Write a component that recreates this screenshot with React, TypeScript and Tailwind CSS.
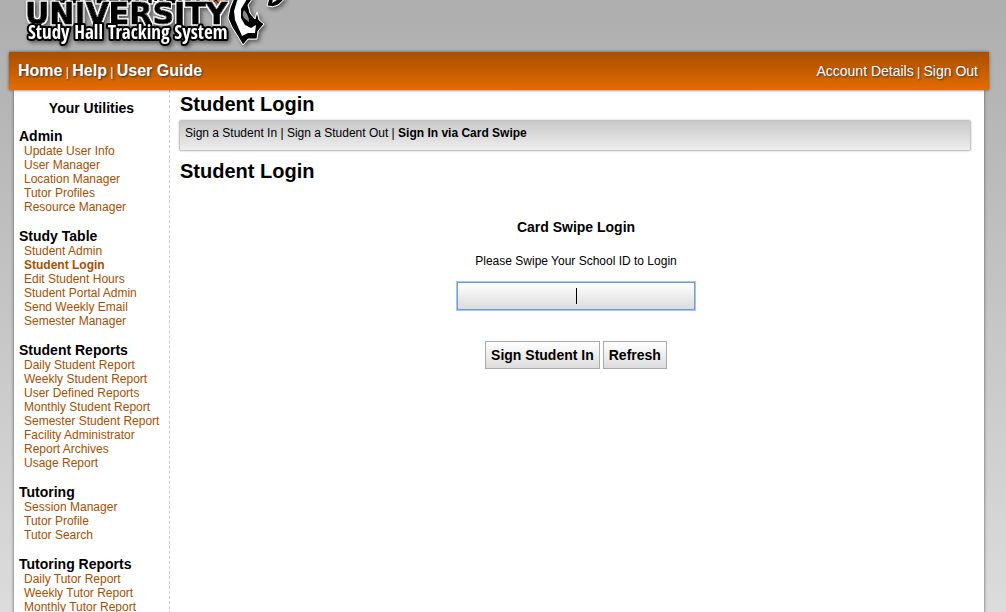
import React from "react";

const sections = [
  { title: "Admin", links: ["Update User Info", "User Manager", "Location Manager", "Tutor Profiles", "Resource Manager"] },
  { title: "Study Table", links: ["Student Admin", "Student Login", "Edit Student Hours", "Student Portal Admin", "Send Weekly Email", "Semester Manager"] },
  { title: "Student Reports", links: ["Daily Student Report", "Weekly Student Report", "User Defined Reports", "Monthly Student Report", "Semester Student Report", "Facility Administrator", "Report Archives", "Usage Report"] },
  { title: "Tutoring", links: ["Session Manager", "Tutor Profile", "Tutor Search"] },
  { title: "Tutoring Reports", links: ["Daily Tutor Report", "Weekly Tutor Report", "Monthly Tutor Report"] },
];

function Logo() {
  return (
    <svg viewBox="0 0 300 52" className="block h-[52px] w-[300px]" role="img" aria-label="Development University Study Hall Tracking System">
      <defs>
        <filter id="shade" x="-10%" y="-20%" width="120%" height="150%">
          <feDropShadow dx="2" dy="2" stdDeviation="2" floodColor="#000" floodOpacity="0.5" />
        </filter>
        <filter id="outline" x="-5%" y="-20%" width="110%" height="140%">
          <feMorphology in="SourceAlpha" operator="dilate" radius="1" result="fat" />
          <feFlood floodColor="#fff" />
          <feComposite in2="fat" operator="in" result="edge" />
          <feMerge>
            <feMergeNode in="edge" />
            <feMergeNode in="SourceGraphic" />
          </feMerge>
        </filter>
      </defs>
      <g filter="url(#shade)" strokeLinejoin="round">
        <path d="M208 -1 L212 3 L216 0 L219 4 L230 -1 Z" fill="#e56a16" stroke="#000" strokeWidth="1" />
        <path d="M234 -2 L230 8 L228 18 L232 27 L237 35 L243 45 L248 39 L257 39 L258 31 L264 24 L259 20 L257 12 L255 19 L250 13 L248 5 L253 -2 Z" fill="#000" stroke="#fff" strokeWidth="1" />
        <path d="M237 1 L234 11 L235 20 L238 27 L242 36 L248 33 L255 33 L256 25 L251 28 L245 25 L241 18 L241 9 L247 -1 L238 -1 Z" fill="#fff" />
        <path d="M244 10 Q241 15 245 19 L249 22 Q249 15 244 10 Z" fill="#888" />
        <path d="M269 -2 L267 6 Q273 8 278 5 Q282 2 285 -2 Z" fill="#000" stroke="#fff" strokeWidth="1" />
        <path d="M273 -1 L272 3 L277 0 Z" fill="#fff" />
        <g fontFamily="DejaVu Sans, sans-serif" fontWeight="bold" fill="#000" stroke="#000" strokeWidth="1" filter="url(#outline)">
          <text x="54" y="3" fontSize="18">DEVELOPMENT</text>
        </g>
        <g fontFamily="DejaVu Sans, sans-serif" fontWeight="bold" fill="#000" stroke="#000" strokeWidth="1" filter="url(#outline)">
          <text x="25" y="24" fontSize="30">UNIVERSITY</text>
        </g>
        <text x="28" y="39" fontSize="19" fontFamily="Liberation Sans Narrow, Open Sans Condensed, sans-serif" fontWeight="bold" fill="#fff" stroke="#000" strokeWidth="4" paintOrder="stroke">Study Hall Tracking System</text>
      </g>
    </svg>
  );
}

export default function App() {
  return (
    <div className="min-h-screen bg-linear-to-b from-[#aeaeae] to-[#dcdcdc] font-['Liberation_Sans',Arial,sans-serif] text-xs text-black">
      <div className="mr-[17px] ml-[9px] flex min-h-screen flex-col">
        <header className="-ml-[9px] h-[52px] shrink-0 overflow-hidden">
          <Logo />
        </header>
        <nav className="z-10 flex h-[38px] shrink-0 items-center justify-between bg-linear-to-b from-[#a84f00] to-[#e56b00] pr-[11px] pl-[9px] text-white shadow-[0_0_3px_#555] text-shadow-[1px_1px_2px_#333]">
          <div className="text-xs">
            <a href="#home" className="text-base font-bold">Home</a> | <a href="#help" className="text-base font-bold">Help</a> | <a href="#guide" className="text-base font-bold">User Guide</a>
          </div>
          <div className="text-xs">
            <a href="#account" className="text-sm">Account Details</a> | <a href="#signout" className="text-sm">Sign Out</a>
          </div>
        </nav>
        <div className="mr-[5px] ml-[5px] flex grow bg-white shadow-[0_0_3px_#555]">
          <aside className="w-[156px] shrink-0 border-r border-dashed border-[#ccc] pt-[10px]">
            <h2 className="mb-3 text-center text-sm leading-4 font-bold">Your Utilities</h2>
            <div className="flex flex-col gap-[14px] pl-[5px]">
              {sections.map((s) => (
                <section key={s.title}>
                  <h3 className="text-sm leading-4 font-bold">{s.title}</h3>
                  <ul className="pl-[5px]">
                    {s.links.map((l) => (
                      <li key={l} className="leading-[14px] whitespace-nowrap">
                        <a href="#page" className={l === "Student Login" ? "font-bold text-[#a84f00]" : "text-[#a84f00]"}>{l}</a>
                      </li>
                    ))}
                  </ul>
                </section>
              ))}
            </div>
          </aside>
          <main className="grow pt-[2px] pr-[13px] pl-[9px]">
            <h1 className="pl-px text-xl leading-6 font-bold">Student Login</h1>
            <div className="mt-1 h-[31px] rounded-xs border border-[#c4c4c4] bg-linear-to-b from-[#c8c8c8] to-[#eee] pt-1 pl-[5px] leading-4 shadow-[0_0_2px_#bbb]">
              <a href="#in">Sign a Student In</a> | <a href="#out">Sign a Student Out</a> | <a href="#swipe" className="font-bold">Sign In via Card Swipe</a>
            </div>
            <h2 className="mt-2 pl-px text-xl leading-6 font-bold">Student Login</h2>
            <form className="mt-9 flex flex-col items-center pl-[2px]" onSubmit={(e) => e.preventDefault()}>
              <h3 className="text-sm leading-4 font-bold">Card Swipe Login</h3>
              <label htmlFor="card" className="mt-[18px] leading-4">Please Swipe Your School ID to Login</label>
              <div className="relative mt-[13px] flex w-[238px]">
                <input id="card" type="text" className="h-7 w-full border border-[#7399dc] bg-linear-to-b from-white to-[#dcdcdc] text-center text-sm caret-transparent shadow-[0_0_0_1px_#a9c5f3] outline-none" />
                <span className="pointer-events-none absolute top-[6px] left-1/2 h-4 w-px bg-black" />
              </div>
              <div className="mt-[31px] flex gap-[3px]">
                <button type="submit" className="h-7 border border-[#aaa] bg-linear-to-b from-white to-[#dcdcdc] px-[5px] text-sm font-bold">Sign Student In</button>
                <button type="button" className="h-7 border border-[#aaa] bg-linear-to-b from-white to-[#dcdcdc] px-[5px] text-sm font-bold">Refresh</button>
              </div>
            </form>
          </main>
        </div>
      </div>
    </div>
  );
}
